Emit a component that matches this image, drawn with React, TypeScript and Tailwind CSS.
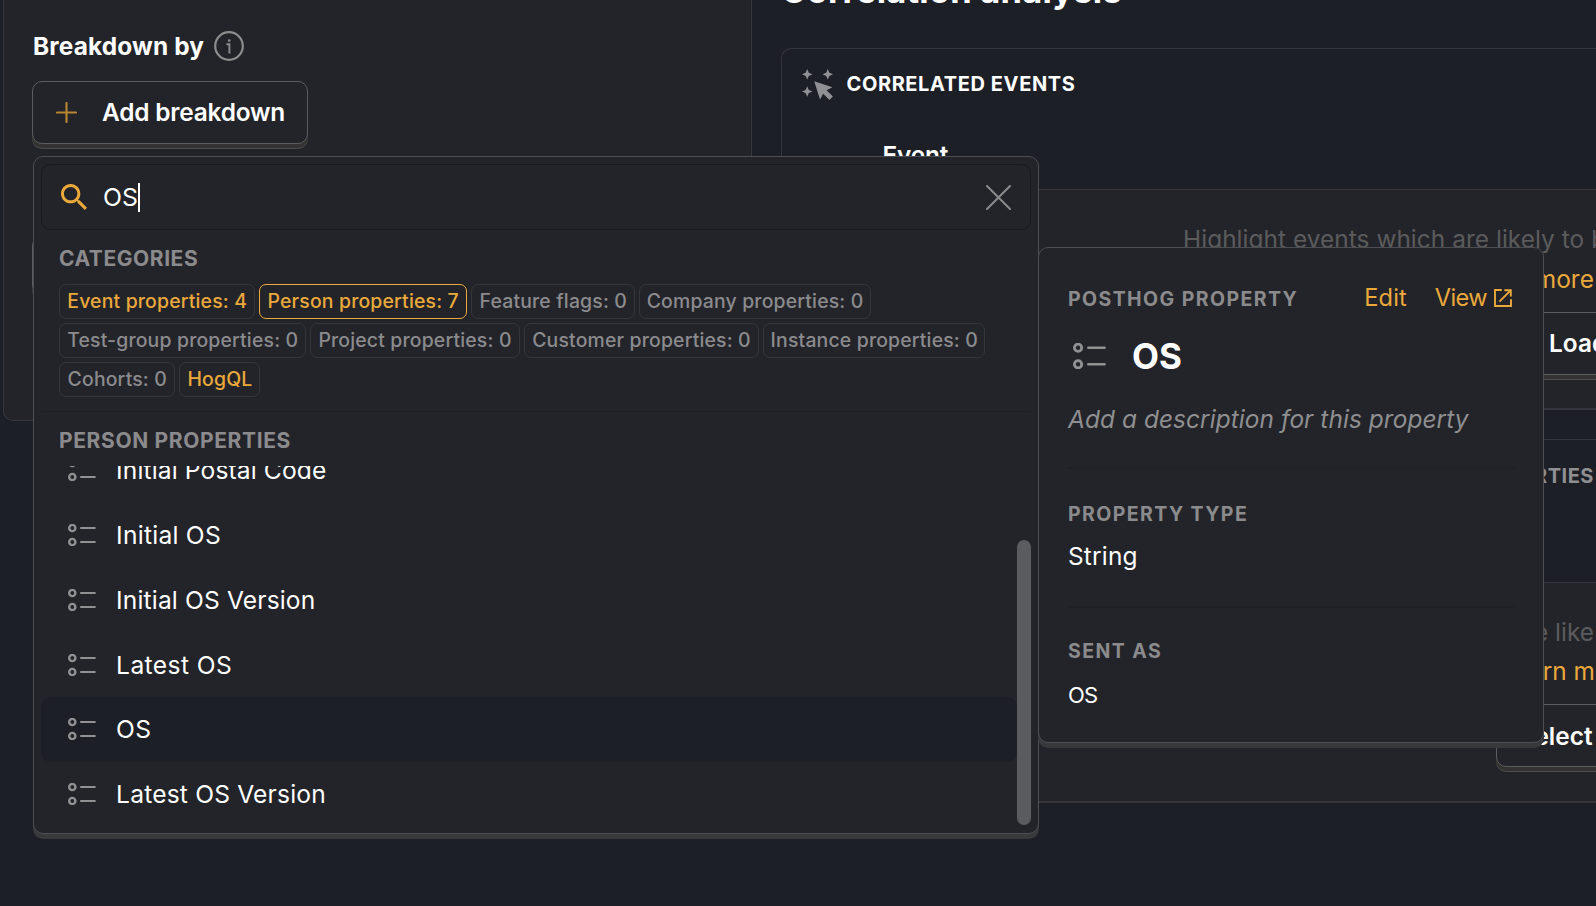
import React from "react";

type Chip = { label: string; width: string; state: "idle" | "match" | "active" };

const CHIPS: Chip[] = [
  { label: "Event properties: 4", width: "w-[195.6px]", state: "match" },
  { label: "Person properties: 7", width: "w-[208.4px]", state: "active" },
  { label: "Feature flags: 0", width: "w-[163.8px]", state: "idle" },
  { label: "Company properties: 0", width: "w-[231.8px]", state: "idle" },
  { label: "Test-group properties: 0", width: "w-[246.6px]", state: "idle" },
  { label: "Project properties: 0", width: "w-[210px]", state: "idle" },
  { label: "Customer properties: 0", width: "w-[235px]", state: "idle" },
  { label: "Instance properties: 0", width: "w-[222.6px]", state: "idle" },
  { label: "Cohorts: 0", width: "w-[115.8px]", state: "idle" },
  { label: "HogQL", width: "w-[81.4px]", state: "match" },
];

const CHIP_STATE = {
  idle: "border-[#35363b] text-[#8b8b8e]",
  match: "border-[#35363b] text-[#eba93b]",
  active: "border-[#eba93b] text-[#eba93b]",
};

const ROWS = [
  { label: "Initial Postal Code", tracking: "tracking-[0.12px]" },
  { label: "Initial OS", tracking: "tracking-[0.25px]" },
  { label: "Initial OS Version", tracking: "tracking-[0.14px]" },
  { label: "Latest OS", tracking: "tracking-[0.4px]" },
  { label: "OS", tracking: "tracking-[0.4px]", selected: true },
  { label: "Latest OS Version", tracking: "tracking-[0.18px]" },
];

function PropertyIcon({ className }: { className: string }) {
  return (
    <svg viewBox="0 0 28 22" fill="none" stroke="#919193" className={className}>
      <circle cx="4.3" cy="4" r="3.1" strokeWidth="2.4" />
      <circle cx="4.3" cy="18" r="3.1" strokeWidth="2.4" />
      <path d="M13 4H26.8M13 18H26.8" strokeWidth="2.2" strokeLinecap="round" />
    </svg>
  );
}

function InfoIcon() {
  return (
    <svg viewBox="0 0 30 30" fill="none" stroke="#8d8d8f" className="size-[30px]">
      <circle cx="15" cy="15" r="13.8" strokeWidth="2.2" />
      <path d="M12.4 13.2H15.4V22.4" strokeWidth="1.9" />
      <circle cx="15.2" cy="9.6" r="1.3" fill="#8d8d8f" stroke="none" />
    </svg>
  );
}

function SparkCursorIcon() {
  return (
    <svg viewBox="0 0 31 31" fill="#8f9093" className="size-[31px] shrink-0">
      <path d="M5.2 0L6.8 3.7L10.5 5.3L6.8 6.9L5.2 10.6L3.6 6.9L0 5.3L3.6 3.7Z" />
      <path d="M25.8 0L27.4 3.7L31 5.3L27.4 6.9L25.8 10.6L24.2 6.9L20.5 5.3L24.2 3.7Z" />
      <path d="M5.2 17.2L6.8 20.9L10.5 22.5L6.8 24.1L5.2 27.8L3.6 24.1L0 22.5L3.6 20.9Z" />
      <path d="M12.2 12.3L30.4 18.2L24.6 21.3L30.9 27.5L27.4 31L21.2 24.8L18 30.4Z" />
    </svg>
  );
}

function RaisedButton({ className, children }: { className: string; children?: React.ReactNode }) {
  return (
    <button
      className={`flex items-center rounded-[10px] border border-[#5b5c60] bg-[#232429] text-left font-semibold text-white shadow-[0_4px_0_0_#343332,0_5px_0_0_#4c4d51] ${className}`}
    >
      {children}
    </button>
  );
}

function LeftPanel() {
  return (
    <section className="ml-[3px] h-[421px] w-[749px] shrink-0 rounded-bl-[10px] border border-t-0 border-[#35363b] bg-[#232429] pt-[31px] pl-7">
      <div className="ml-px flex h-[30px] items-center">
        <span className="w-[181px] font-bold tracking-[0.15px]">Breakdown by</span>
        <InfoIcon />
      </div>
      <RaisedButton className="mt-5 h-[63px] w-[276px] pl-[23px]">
        <svg viewBox="0 0 21 21" stroke="#b98631" strokeWidth="2.1" strokeLinecap="round" className="mr-[25px] size-[21px]">
          <path d="M10.5 1V20M1 10.5H20" />
        </svg>
        <span className="tracking-[-0.18px]">Add breakdown</span>
      </RaisedButton>
      <RaisedButton className="mt-[92px] h-[59px] w-[276px]" />
    </section>
  );
}

function RightPanel() {
  return (
    <section className="w-[844px] shrink-0 pl-[29px]">
      <h2 className="-mt-[29px] h-10 text-[34.5px] leading-10 font-bold tracking-[0.2px]">Correlation analysis</h2>

      <div className="mt-[37px] h-[362px] w-[900px] overflow-hidden rounded-[10px] border border-b-2 border-[#35363b]">
        <div className="h-[140px] pt-[19.5px] pl-[19.5px]">
          <div className="flex h-[31px] items-center">
            <SparkCursorIcon />
            <span className="pl-[14px] text-[20px] font-bold tracking-[0.6px]">CORRELATED EVENTS</span>
          </div>
          <div className="mt-[37.5px] pl-[81px] leading-9 font-semibold tracking-[-0.2px]">Event</div>
        </div>
        <div className="h-[219px] border-t border-[#35363b] bg-[#232429] pt-[29px] leading-[40px]">
          <p className="pl-[401px] tracking-[0.05px] text-[#5b5b5d]">Highlight events which are likely to be</p>
          <p className="w-[812px] text-right tracking-[0.07px] text-[#eba93b]">Learn more</p>
          <RaisedButton className="mt-[13px] ml-[746px] h-[63px] w-[200px] pb-px pl-5">
            <span>Load results</span>
          </RaisedButton>
        </div>
      </div>

      <div className="mt-[29px] h-[364px] w-[900px] overflow-hidden rounded-[10px] border border-b-2 border-[#35363b]">
        <div className="h-[142px] w-[812px] pt-[21px] text-right text-[20px] leading-[30px] font-bold tracking-[0.54px] text-[#8f8f92]">
          CORRELATED PROPERTIES
        </div>
        <div className="h-[219px] border-t border-[#35363b] bg-[#232429] pt-[30px] leading-[39px]">
          <p className="w-[812px] text-right text-[#5b5b5d]">Highlight properties which are like</p>
          <p className="w-[813px] text-right text-[#eba93b]">Learn m</p>
          <RaisedButton className="mt-[13px] ml-[714px] h-[63px] w-[240px] pt-px">
            <span className="w-[95.5px] text-right">Select</span>
          </RaisedButton>
        </div>
      </div>
    </section>
  );
}

function TaxonomicDropdown() {
  return (
    <div className="absolute top-[156px] left-[33px] h-[678px] w-[1006px] rounded-[10px] border border-[#4d4e53] bg-[#232429] p-[7px] shadow-[0_5px_0_0_#38393d]">
      <div className="flex h-[66px] items-center rounded-[9px] border border-[#191a1e] pr-[19.5px] pl-[18.5px]">
        <svg viewBox="3 3 17.49 17.49" fill="#eba93b" className="size-[26px]">
          <path d="M15.5 14h-.79l-.28-.27C15.41 12.59 16 11.11 16 9.5 16 5.91 13.09 3 9.5 3S3 5.91 3 9.5 5.91 16 9.5 16c1.61 0 3.09-.59 4.23-1.57l.27.28v.79l5 4.99L20.49 19l-4.99-5zm-6 0C7.01 14 5 11.99 5 9.5S7.01 5 9.5 5 14 7.01 14 9.5 11.99 14 9.5 14z" />
        </svg>
        <span className="pt-px pl-[16.5px] text-[24.8px] text-white">OS</span>
        <span className="h-[29px] w-[2px] bg-white" />
        <svg viewBox="0 0 25 25" stroke="#8b8b8e" strokeWidth="2" strokeLinecap="round" className="ml-auto size-[25px]">
          <path d="M1 1L24 24M24 1L1 24" />
        </svg>
      </div>

      <div className="px-[18px] pt-[14px]">
        <h3 className="text-[21px] leading-[30px] font-bold tracking-[0.55px] text-[#8b8b8d]">CATEGORIES</h3>
        <div className="mt-[10px] flex flex-wrap gap-1">
          {CHIPS.map((chip) => (
            <span
              key={chip.label}
              className={`flex h-[35px] items-center justify-center rounded-[7px] border pl-[0.8px] text-[19.4px] font-medium tracking-[0.18px] whitespace-nowrap ${chip.width} ${CHIP_STATE[chip.state]}`}
            >
              {chip.label}
            </span>
          ))}
        </div>
      </div>

      <div className="mt-[14px] border-t border-[#1f2025] pt-[14px] pl-[18px]">
        <h3 className="text-[21px] leading-[30px] font-bold tracking-[0.63px] text-[#8b8b8d]">PERSON PROPERTIES</h3>
      </div>

      <div className="mt-[10px] flex h-[360.6px]">
        <ul className="flex h-full w-[976px] flex-col justify-end overflow-hidden">
          {ROWS.map((row) => (
            <li
              key={row.label}
              className={`flex h-[64.8px] shrink-0 items-center rounded-[10px] pl-[26.5px] text-white ${row.selected ? "bg-[#1d1f27]" : ""}`}
            >
              <PropertyIcon className="h-[22px] w-7" />
              <span className={`pt-[0.9px] pl-[20.6px] text-[24.6px] ${row.tracking}`}>{row.label}</span>
            </li>
          ))}
        </ul>
        <div className="mt-[74px] h-[285px] w-[14px] rounded-full bg-[#5b5c60]" />
      </div>
    </div>
  );
}

function PropertyPopover() {
  const caption = "text-[19.5px] font-bold tracking-[1.42px] text-[#8b8b8d]";
  return (
    <div className="absolute top-[247px] left-[1038px] h-[496px] w-[506px] rounded-[10px] border border-[#4d4e53] bg-[#232429] px-[29px] pt-8 shadow-[0_5px_0_0_#38393d]">
      <div className="flex h-9 items-baseline leading-9">
        <span className={caption}>POSTHOG PROPERTY</span>
        <span className="ml-auto text-[23.6px] tracking-[0.1px] text-[#eba93b]">Edit</span>
        <span className="ml-[28px] text-[23.6px] tracking-[-0.6px] text-[#eba93b]">View</span>
        <svg viewBox="0 0 18 18" fill="none" stroke="#eba93b" strokeWidth="1.9" className="mr-[2px] ml-[7px] size-[18px] self-center">
          <path d="M7.8 1H1V17H17V10.2" />
          <path d="M5.4 12.6L15.6 2.4M10.4 1.2H16.8V7.6" />
        </svg>
      </div>
      <div className="mt-[18px] flex h-11 items-center pl-[5px]">
        <PropertyIcon className="h-[26px] w-[33px]" />
        <span className="pl-[26px] text-[35px] leading-[44px] font-bold text-white">OS</span>
      </div>
      <p className="mt-[23px] leading-9 tracking-[0.08px] text-[#8f8f91] italic">Add a description for this property</p>
      <hr className="mt-[30px] border-t-2 border-[#1f2025]" />
      <h4 className={`mt-[30px] leading-[30px] ${caption}`}>PROPERTY TYPE</h4>
      <p className="mt-[9px] leading-9 tracking-[0.2px] text-white">String</p>
      <hr className="mt-[32px] border-t-2 border-[#1f2025]" />
      <h4 className={`mt-[28px] leading-[30px] ${caption}`}>SENT AS</h4>
      <p className="mt-[11px] text-[22px] leading-9 tracking-[-0.9px] text-white">OS</p>
    </div>
  );
}

export default function App() {
  return (
    <main className="relative flex h-[906px] w-[1596px] items-start overflow-hidden bg-[#1d1f27] font-['Inter',sans-serif] text-[24.4px] whitespace-nowrap text-white">
      <LeftPanel />
      <RightPanel />
      <TaxonomicDropdown />
      <PropertyPopover />
    </main>
  );
}
